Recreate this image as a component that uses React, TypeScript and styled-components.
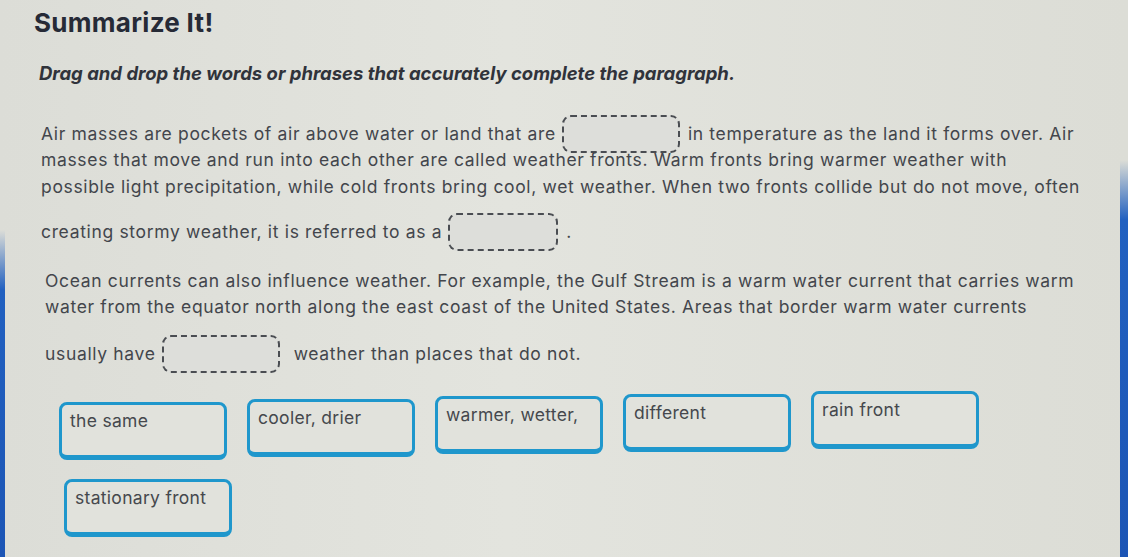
import React from 'react';
import styled, { createGlobalStyle } from 'styled-components';

/* GLOBAL */
const GlobalStyle = createGlobalStyle`
  html, body {
    margin: 0;
    padding: 0;
    background: #dfe0da;
  }
  body {
    font-family: Inter, "Open Sans", "Liberation Sans", sans-serif;
  }
`;

/* STYLES */
const Page = styled.div`
  display: flex;
  width: 1128px;
  height: 557px;
  overflow: hidden;
  background: linear-gradient(90deg, #dcddd7 0%, #e3e4de 45%, #dcddd6 100%);
`;

const Edge = styled.div`
  flex: 0 0 ${(p: { $w: number; $from: number }) => p.$w}px;
  background: linear-gradient(
    180deg,
    rgba(31, 90, 190, 0) 0px,
    rgba(31, 90, 190, 0) ${(p) => p.$from}px,
    #2160c0 ${(p) => p.$from + 60}px,
    #1c55b5 100%
  );
`;

const Content = styled.div`
  flex: 1;
  padding: 6px 0 0 29px;
`;

const Title = styled.h1`
  margin: 0;
  font-size: 26px;
  line-height: 34px;
  font-weight: 700;
  color: #262a36;
  letter-spacing: 0.3px;
`;

const Instructions = styled.p`
  margin: 20px 0 0 5px;
  font-size: 18.5px;
  line-height: 26px;
  font-weight: 700;
  font-style: italic;
  color: #30333b;
`;

const Paragraph = styled.div`
  margin-left: ${(p: { $left: number }) => p.$left}px;
  font-size: 17.5px;
  letter-spacing: 0.66px;
  color: #43464c;
`;

const Line = styled.div`
  height: 26px;
  line-height: 26px;
  white-space: nowrap;
  margin-top: ${(p: { $gap: number }) => p.$gap}px;
`;

const Blank = styled.span`
  display: inline-block;
  vertical-align: middle;
  width: ${(p: { $w: number; $right: number }) => p.$w}px;
  height: 38px;
  margin: -8px ${(p) => p.$right}px -6px 6px;
  box-sizing: border-box;
  border: 2px dashed #4a4d52;
  border-radius: 9px;
  background: #dddeda;
`;

const Bank = styled.div`
  display: grid;
  grid-template-columns: repeat(5, 168px);
  column-gap: 20px;
  row-gap: 22px;
  margin: 29px 0 0 25px;
`;

const Tile = styled.div`
  height: 58px;
  box-sizing: border-box;
  padding: 5px 8px;
  border: 3px solid #1f97cc;
  border-bottom-width: 5px;
  border-radius: 8px;
  background: #e1e2dc;
  font-size: 17.5px;
  letter-spacing: 0.3px;
  color: #45484d;
  transform: translate(${(p: { $dx: number; $dy: number }) => p.$dx}px, ${(p) => p.$dy}px);
`;

/* DATA */
const words = [
  { text: 'the same', dx: 0, dy: 6 },
  { text: 'cooler, drier', dx: 0, dy: 3 },
  { text: 'warmer, wetter,', dx: 0, dy: 0 },
  { text: 'different', dx: 0, dy: -2 },
  { text: 'rain front', dx: 0, dy: -5 },
  { text: 'stationary front', dx: 5, dy: 3 },
];

/* COMPONENT */
export default function App() {
  return (
    <>
      <GlobalStyle />
      <Page>
        <Edge $w={5} $from={230} />
        <Content>
          <Title>Summarize It!</Title>
          <Instructions>Drag and drop the words or phrases that accurately complete the paragraph.</Instructions>
          <Paragraph $left={7}>
            <Line $gap={35}>
              Air masses are pockets of air above water or land that are
              <Blank $w={118} $right={8} />
              in temperature as the land it forms over. Air
            </Line>
            <Line $gap={0}>
              masses that move and run into each other are called weather fronts. Warm fronts bring warmer weather with
            </Line>
            <Line $gap={1}>
              possible light precipitation, while cold fronts bring cool, wet weather. When two fronts collide but do
              not move, often
            </Line>
            <Line $gap={19}>
              creating stormy weather, it is referred to as a
              <Blank $w={110} $right={8} />.
            </Line>
          </Paragraph>
          <Paragraph $left={11}>
            <Line $gap={23}>
              Ocean currents can also influence weather. For example, the Gulf Stream is a warm water current that
              carries warm
            </Line>
            <Line $gap={0}>
              water from the equator north along the east coast of the United States. Areas that border warm water
              currents
            </Line>
            <Line $gap={21}>
              usually have
              <Blank $w={118} $right={14} />
              weather than places that do not.
            </Line>
          </Paragraph>
          <Bank>
            {words.map((w) => (
              <Tile key={w.text} $dx={w.dx} $dy={w.dy}>
                {w.text}
              </Tile>
            ))}
          </Bank>
        </Content>
        <Edge $w={8} $from={160} />
      </Page>
    </>
  );
}
